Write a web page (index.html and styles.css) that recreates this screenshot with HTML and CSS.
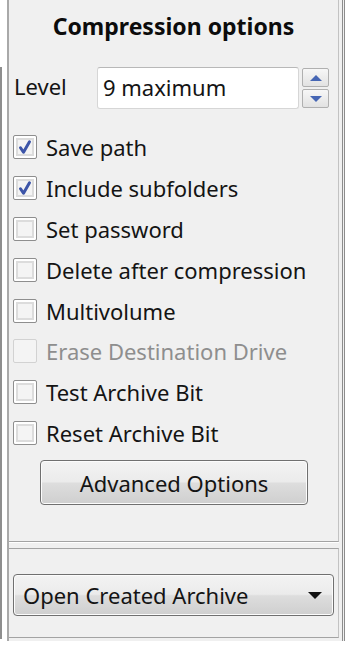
FILE: index.html
```html
<!DOCTYPE html>
<html lang="en">
<head>
  <meta charset="UTF-8" />
  <title>Compression options</title>
  <link rel="stylesheet" href="styles.css">
</head>
<body>

  <div class="window">
    <div class="edge"><div class="edge-line"></div></div>

    <div class="panel">
      <div class="group options">
        <h2 class="title">Compression options</h2>

        <div class="level-row">
          <span class="label">Level</span>
          <div class="field">9 maximum</div>
          <div class="spin">
            <div class="spin-btn"><span class="tri up"></span></div>
            <div class="spin-btn"><span class="tri down"></span></div>
          </div>
        </div>

        <ul class="checks">
          <li class="check on"><span class="box"><svg viewBox="0 0 12 12"><path d="M3 6.5 L5 9.5 L9 2.5" /></svg></span>Save path</li>
          <li class="check on"><span class="box"><svg viewBox="0 0 12 12"><path d="M3 6.5 L5 9.5 L9 2.5" /></svg></span>Include subfolders</li>
          <li class="check"><span class="box"></span>Set password</li>
          <li class="check"><span class="box"></span>Delete after compression</li>
          <li class="check"><span class="box"></span>Multivolume</li>
          <li class="check disabled"><span class="box"></span>Erase Destination Drive</li>
          <li class="check"><span class="box"></span>Test Archive Bit</li>
          <li class="check"><span class="box"></span>Reset Archive Bit</li>
        </ul>

        <div class="push-row">
          <button class="push">Advanced Options</button>
        </div>
      </div>

      <div class="group after">
        <div class="combo">
          <span>Open Created Archive</span>
          <span class="arrow"></span>
        </div>
      </div>
    </div>
  </div>

</body>
</html>
```

FILE: styles.css
```css
* { box-sizing: border-box; margin: 0; padding: 0; }
body {
  background: #fff;
  font-family: "Noto Sans", "Open Sans", sans-serif;
  color: #141414;
  font-size: 22px;
}
.window {
  display: flex;
  width: 350px;
  height: 641px;
}
.edge {
  width: 7px;
  padding-top: 67px;
}
.edge-line {
  height: 572px;
  width: 2px;
  background: #8e8e8e;
}
.panel {
  width: 338px;
  background: #f0f0f0;
  border-left: 2px solid #a9a9a9;
  border-right: 3px double #8c8c8c;
  padding-right: 3px;
  display: flex;
  flex-direction: column;
}
.group {
  border-right: 1px solid #c2c2c2;
}
.options {
  height: 542px;
  border-bottom: 1px solid #a3a3a3;
  box-shadow: 0 1px 0 #fff;
}
.after {
  margin-top: 6px;
  height: 90px;
  border-top: 1px solid #a3a3a3;
  border-bottom: 1px solid #a3a3a3;
  padding: 25px 4px 0 4px;
}
.title {
  font-size: 23px;
  font-weight: bold;
  text-align: center;
  padding-top: 10px;
  height: 67px;
  color: #0c0c0c;
}
.level-row {
  display: flex;
  align-items: center;
  height: 42px;
  padding-left: 5px;
}
.label { width: 83px; padding-bottom: 4px; }
.field {
  width: 202px;
  height: 42px;
  background: #fff;
  border: 1px solid #d6d6d6;
  border-top-color: #b8b8b8;
  border-radius: 3px;
  padding-left: 5px;
  line-height: 38px;
}
.spin {
  margin-left: 3px;
  display: flex;
  flex-direction: column;
  gap: 2px;
}
.spin-btn {
  width: 27px;
  height: 19px;
  border: 1px solid #b0b0b0;
  border-radius: 2px;
  background: linear-gradient(#f7f7f7, #e2e2e2);
  display: flex;
  align-items: center;
  justify-content: center;
}
.tri {
  width: 0;
  height: 0;
  border-left: 6px solid transparent;
  border-right: 6px solid transparent;
}
.tri.up { border-bottom: 6px solid #4666b4; }
.tri.down { border-top: 6px solid #4666b4; }
.checks {
  list-style: none;
  margin-top: 18px;
  padding-left: 4px;
}
.check {
  display: flex;
  align-items: center;
  height: 40.8px;
}
.box {
  width: 24px;
  height: 24px;
  margin-right: 9px;
  border: 1px solid #8e8e8e;
  border-radius: 2px;
  background: #f4f4f4;
  box-shadow: inset 0 0 0 2px #fff, inset 0 0 0 4px #dcdcdc;
  display: flex;
  align-items: center;
  justify-content: center;
  flex-shrink: 0;
}
.box svg {
  width: 18px;
  height: 18px;
  fill: none;
  stroke: #3d55a8;
  stroke-width: 2;
  stroke-linecap: round;
  stroke-linejoin: round;
}
.check.disabled { color: #8e8e8e; }
.check.disabled .box {
  border-color: #d2d2d2;
  box-shadow: none;
  background: #f4f4f4;
}
.push-row {
  padding: 7px 0 0 31px;
}
.push {
  width: 268px;
  height: 45px;
  font-family: inherit;
  font-size: 22px;
  color: #141414;
  border: 1px solid #707070;
  border-radius: 4px;
  background: linear-gradient(#f3f3f3 0%, #ebebeb 48%, #dddddd 52%, #cfcfcf 100%);
  box-shadow: inset 0 0 0 1px #fcfcfc;
}
.combo {
  height: 42px;
  border: 1px solid #707070;
  border-radius: 4px;
  background: linear-gradient(#f3f3f3 0%, #ebebeb 48%, #dddddd 52%, #cfcfcf 100%);
  box-shadow: inset 0 0 0 1px #fcfcfc;
  display: flex;
  align-items: center;
  justify-content: space-between;
  padding: 0 11px 0 9px;
}
.arrow {
  width: 0;
  height: 0;
  border-left: 7px solid transparent;
  border-right: 7px solid transparent;
  border-top: 7px solid #111;
}
```
